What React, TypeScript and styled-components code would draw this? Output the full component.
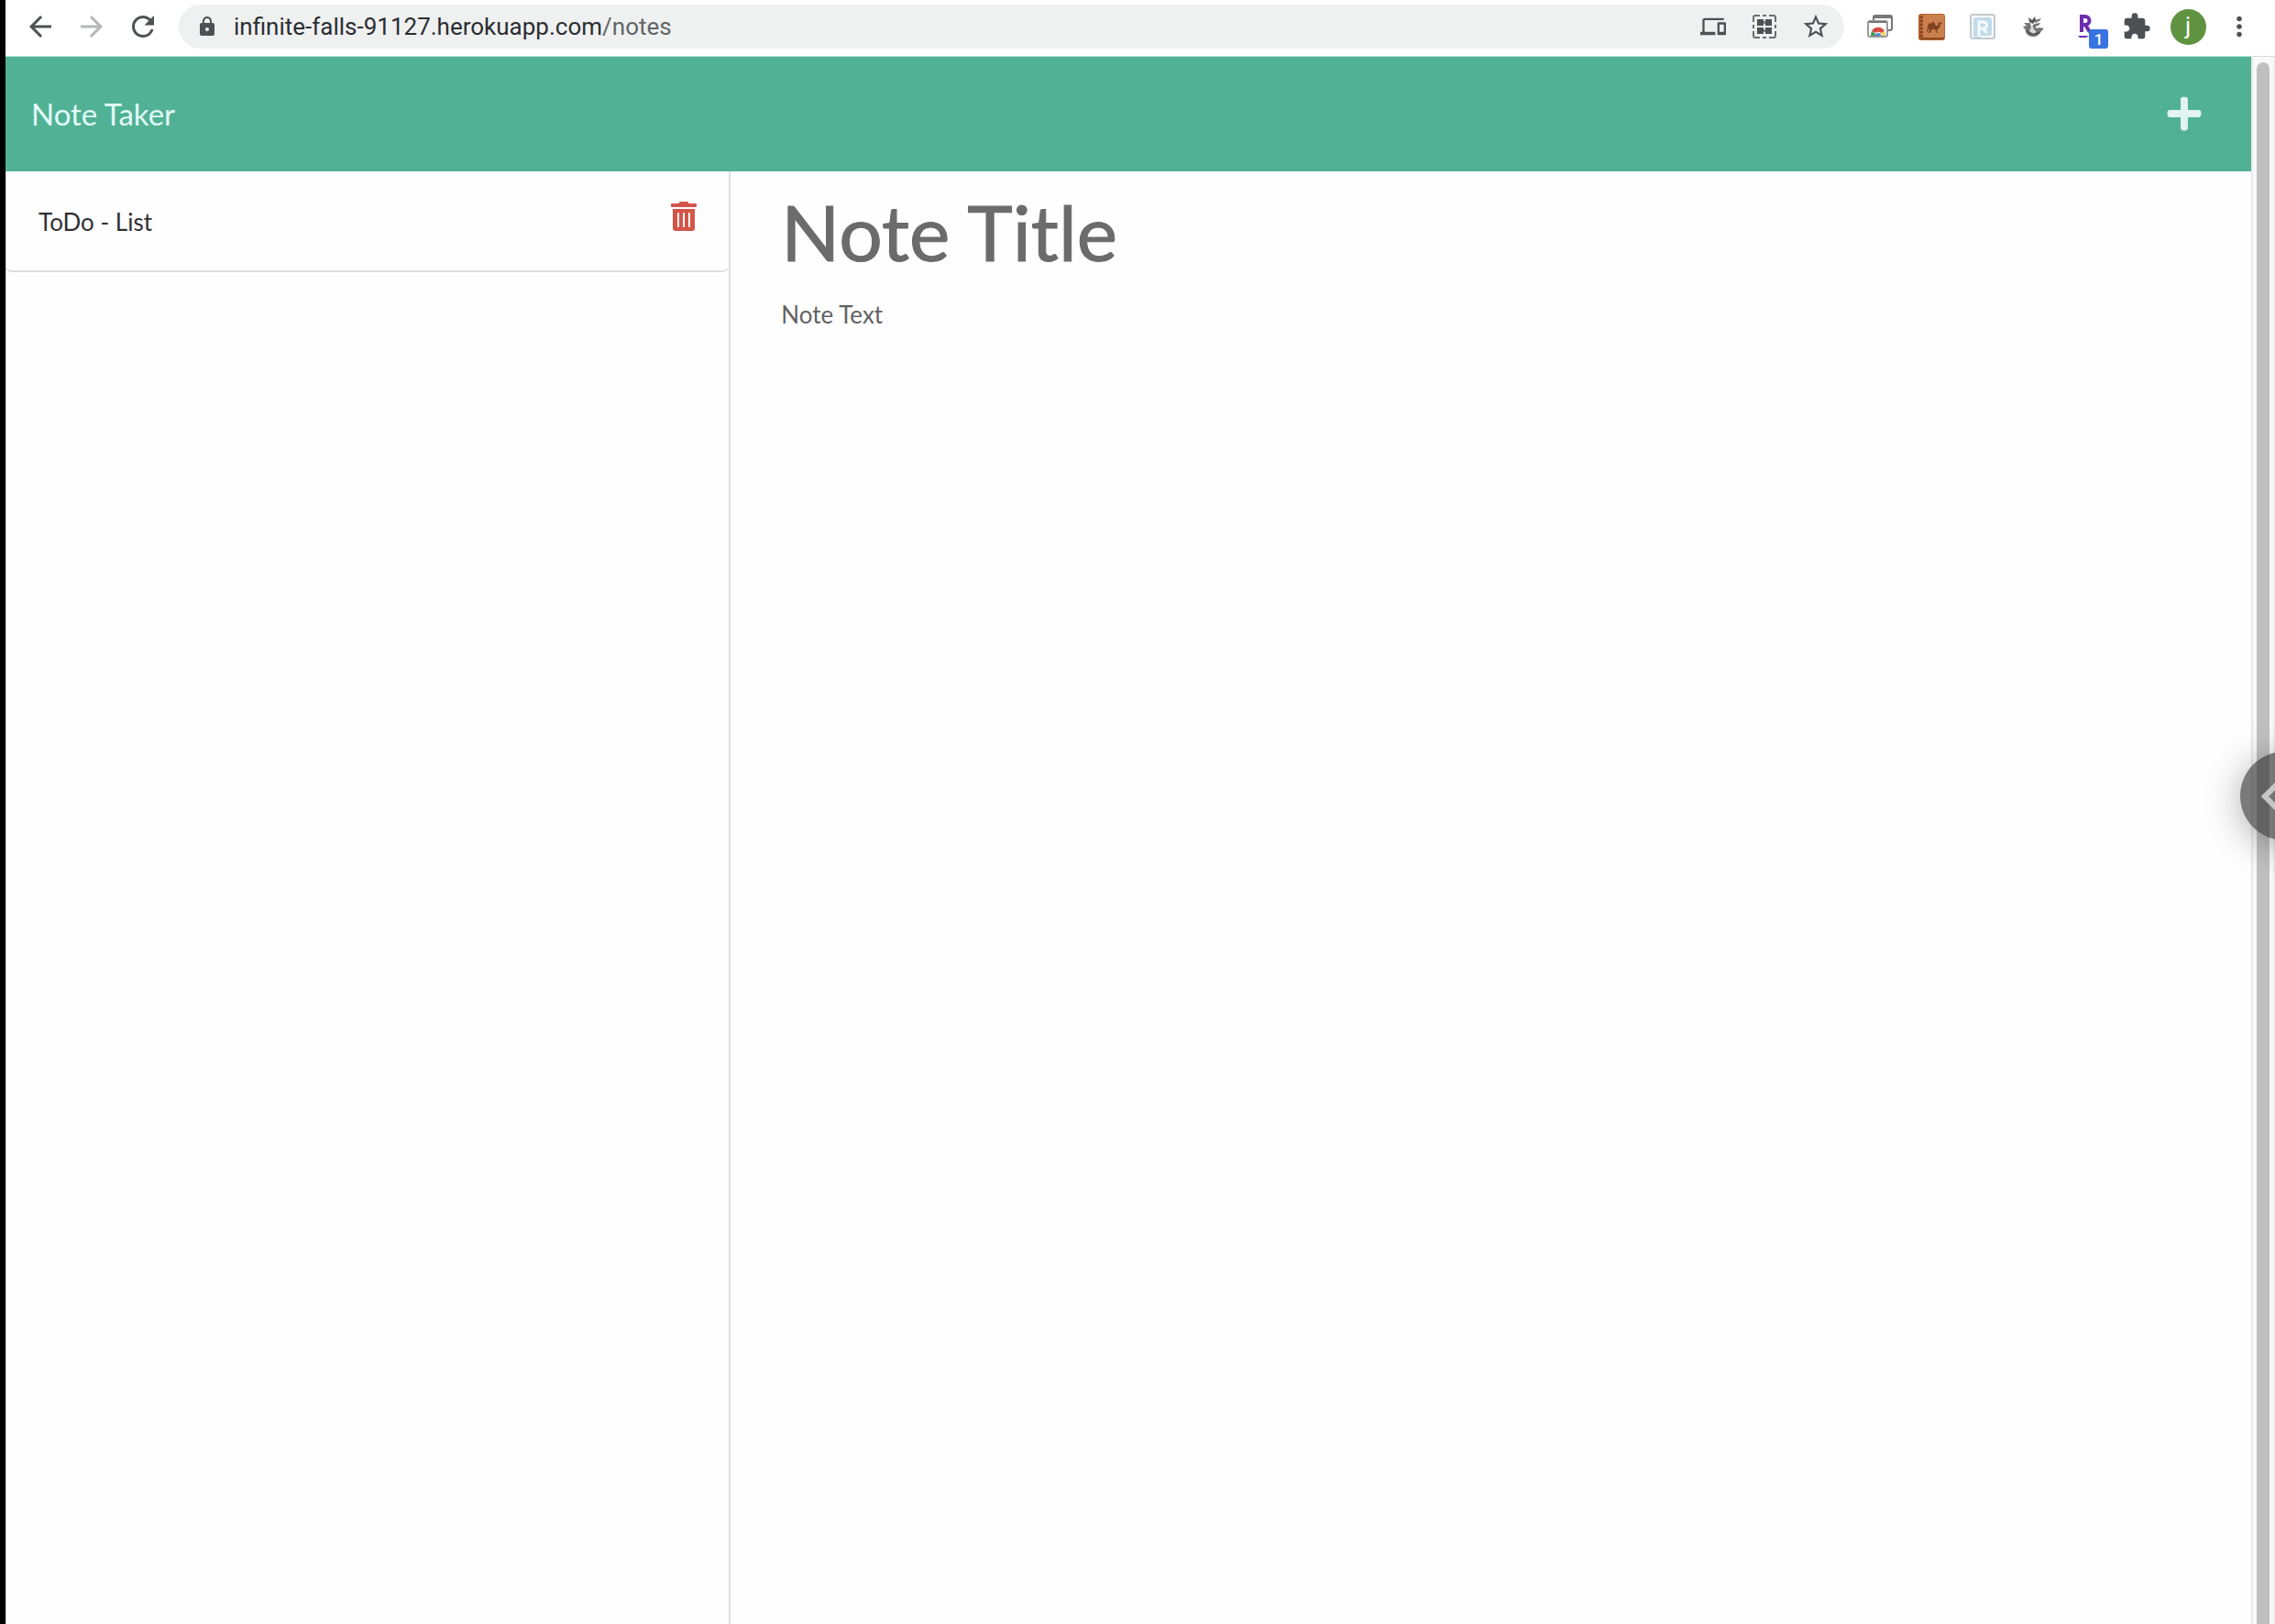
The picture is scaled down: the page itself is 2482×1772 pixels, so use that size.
import React from "react";
import styled, { createGlobalStyle } from "styled-components";
import {
  MdArrowBack,
  MdArrowForward,
  MdRefresh,
  MdLock,
  MdOutlineDevices,
  MdStarBorder,
  MdExtension,
  MdMoreVert,
} from "react-icons/md";
import { FaPlus, FaTrashAlt } from "react-icons/fa";

const GlobalStyle = createGlobalStyle`
  *, *::before, *::after { box-sizing: border-box; }
  body {
    margin: 0;
    background: #fefefe;
    font-family: Lato, "Open Sans", sans-serif;
    overflow: hidden;
  }
  button { border: 0; padding: 0; background: none; cursor: pointer; font: inherit; }
`;

const Window = styled.div`
  display: flex;
  flex-direction: column;
  min-height: 100vh;
  border-left: 6px solid #000;
`;

const Toolbar = styled.header`
  display: flex;
  align-items: center;
  gap: 11px;
  padding: 5px 11px 8px 10px;
  background: #fff;
  font-family: Roboto, "Liberation Sans", sans-serif;
`;

const Group = styled.div`
  display: flex;
`;

const ToolButton = styled.button<{ $tone?: string; $size?: number }>`
  position: relative;
  display: flex;
  align-items: center;
  justify-content: center;
  width: 56px;
  height: 48px;
  color: ${(p) => p.$tone ?? "#4d5154"};
  font-size: ${(p) => p.$size ?? 36}px;
`;

const AddressBar = styled.div`
  flex: 1;
  display: flex;
  align-items: center;
  padding: 0 3px 0 19px;
  border-radius: 24px;
  background: #eff1f1;
  color: #4d5154;
  font-size: 24px;
`;

const Url = styled.span`
  flex: 1;
  padding-left: 17px;
  color: #2b2e31;
  font-size: 26px;
  line-height: 32px;
`;

const UrlPath = styled.span`
  color: #616568;
`;

const Badge = styled.span`
  position: absolute;
  right: 3px;
  bottom: 0;
  width: 21px;
  height: 21px;
  border-radius: 3px;
  background: #3874e0;
  color: #fff;
  font-size: 17px;
  font-weight: 500;
  line-height: 22px;
  text-align: center;
`;

const Avatar = styled.span`
  width: 39px;
  height: 39px;
  border-radius: 50%;
  background: #5f9341;
  color: #fff;
  font-size: 26px;
  line-height: 37px;
  text-align: center;
`;

const Viewport = styled.div`
  flex: 1;
  display: flex;
  border-left: 1px solid #d3d3d3;
`;

const Page = styled.div`
  flex: 1;
  display: flex;
  flex-direction: column;
  margin-left: -1px;
`;

const Navbar = styled.nav`
  display: flex;
  align-items: center;
  justify-content: space-between;
  height: 126px;
  padding: 0 52px 2px 28px;
  border-top: 1px solid #b5e3d6;
  background: #51b194;
`;

const Brand = styled.a`
  color: #e2fbf8;
  font-size: 33px;
  line-height: 48px;
  text-decoration: none;
`;

const AddButton = styled.button`
  display: flex;
  color: #e2f4f1;
  font-size: 42px;
`;

const Columns = styled.div`
  flex: 1;
  display: flex;
`;

const Sidebar = styled.aside`
  width: 32.3%;
  border-right: 2px solid #dfdfdf;
`;

const NoteList = styled.ul`
  margin: 0;
  padding: 0;
  list-style: none;
`;

const NoteItem = styled.li`
  display: flex;
  align-items: flex-start;
  justify-content: space-between;
  height: 110px;
  padding: 33px 33px 0 36px;
  border-bottom: 2px solid #dfdfdf;
  border-radius: 0 0 7px 7px;
`;

const NoteName = styled.button`
  color: #2f3133;
  font-size: 26px;
  line-height: 44px;
`;

const DeleteButton = styled.button`
  display: flex;
  color: #d3554a;
  font-size: 32px;
`;

const Editor = styled.main`
  flex: 1;
  display: flex;
  flex-direction: column;
  padding: 14px 55px;
`;

const TitleInput = styled.input`
  width: 100%;
  height: 102px;
  padding: 0;
  border: 0;
  outline: 0;
  background: none;
  color: #333;
  font: 84px Lato, sans-serif;
  &::placeholder {
    color: #6b6b6b;
    opacity: 1;
    -webkit-text-stroke: 1px #6b6b6b;
  }
`;

const TextInput = styled.textarea`
  flex: 1;
  width: 100%;
  padding: 20px 0 0;
  border: 0;
  outline: 0;
  resize: none;
  background: none;
  color: #333;
  font: 26px/40px Lato, sans-serif;
  &::placeholder { color: #626262; opacity: 1; }
`;

const ScrollTrack = styled.div`
  display: flex;
  width: 26px;
  padding: 6px 4px 0 4px;
  border-left: 2px solid #e9e9e9;
  border-right: 2px solid #ececec;
  border-top: 1px solid #d8d8d8;
  background: #f9f9f9;
`;

const ScrollThumb = styled.div`
  width: 14px;
  border-radius: 7px 7px 0 0;
  background: #c0c0c0;
`;

const DrawerToggle = styled.button`
  position: fixed;
  top: 820px;
  right: -59px;
  width: 97px;
  height: 97px;
  border-radius: 50%;
  background: rgba(40, 40, 40, 0.62);
  box-shadow: 0 6px 40px rgba(0, 0, 0, 0.32);
`;

const DrawerArrow = styled.svg`
  display: block;
  margin-left: 23px;
`;

const ScanIcon = () => (
  <svg width="26" height="26" viewBox="0 0 26 26" aria-hidden="true">
    <path
      d="M1 8V3a2 2 0 0 1 2-2h5M11 1h4M18 1h5a2 2 0 0 1 2 2v5M25 11v4M25 18v5a2 2 0 0 1-2 2h-5M15 25h-4M8 25H3a2 2 0 0 1-2-2v-5M1 15v-4"
      fill="none"
      stroke="#6c6f71"
      strokeWidth="2"
    />
    <path d="M5 5h7v7H5zM14 5h7v7h-7zM5 14h7v7H5zM14 14h7v7h-7z" fill="#4d5154" />
    <path d="M12 7h2v3h-2zM12 16h2v3h-2z" fill="#85888a" />
  </svg>
);

const CastIcon = () => (
  <svg width="28" height="26" viewBox="0 0 28 26" aria-hidden="true">
    <path d="M7 6V3a2 2 0 0 1 2-2h16a2 2 0 0 1 2 2v12a2 2 0 0 1-2 2h-2" fill="none" stroke="#777" strokeWidth="2" />
    <path d="M7 3h20" stroke="#777" strokeWidth="2" />
    <rect x="1" y="7" width="21" height="17" rx="2" fill="#fafafa" stroke="#999" strokeWidth="2" />
    <path d="M2 8h19" stroke="#777" strokeWidth="2" />
    <path d="M5 18a8 8 0 0 1 14 0l-4 2a4 4 0 0 0-6 0z" fill="#d64a3f" />
    <path d="M5 18l4 3v2H4a8 8 0 0 1 1-5z" fill="#3f9a57" />
    <path d="M19 18a8 8 0 0 1 1 5h-5v-3z" fill="#f3cf62" />
    <path d="M9 23a3 3 0 0 1 6 0z" fill="#4a86dc" />
  </svg>
);

const CamelIcon = () => (
  <svg width="29" height="29" viewBox="0 0 29 29" aria-hidden="true">
    <rect width="29" height="29" rx="3" fill="#b56430" />
    <rect x="5" y="1" width="23" height="25" rx="2" fill="#cb7f4c" />
    <path d="M1 27h27" stroke="#8a4c28" strokeWidth="2" />
    <path d="M3 3v23" stroke="#7d4423" strokeWidth="3" strokeDasharray="2 2" />
    <path
      d="M9 20l1-6 1-3 2-1 1 1 2-3 2 3 1 2 2 0 1-3 2-1 2 1-1 1-1 0-1 4-2 2-1 1 1 3h-1l-2-4h-3l-1 1-1 3h-2l1-4-1-1-1 4z"
      fill="#7d4220"
    />
  </svg>
);

const PageRulerIcon = () => (
  <svg width="28" height="28" viewBox="0 0 28 28" aria-hidden="true">
    <rect x="1" y="1" width="26" height="26" rx="2" fill="#f4f9fc" stroke="#c3c9cc" strokeWidth="2" />
    <path d="M7 4h14a3 3 0 0 1 3 3v14a3 3 0 0 1-3 3h-9v2H7a3 3 0 0 1-3-3V7a3 3 0 0 1 3-3z" fill="#c2dbeb" />
    <path d="M10 25V9h5a3 3 0 0 1 0 7h-5M14 16l5 5" fill="none" stroke="#f4fafd" strokeWidth="3" />
  </svg>
);

const BirdIcon = () => (
  <svg width="24" height="24" viewBox="0 0 24 24" aria-hidden="true">
    <path d="M6 2l4 3 3-4 1 4-3 4-4-2z" fill="#555" />
    <path d="M13 5l7-2-2 3-5 2z" fill="#777" />
    <path d="M12 9l7-1-2 3-4 1z" fill="#777" />
    <path d="M1 8l7 0 1 5 3-4 3 5 3-1 5 1-3 3c-2 4-5 6-9 6-5 0-8-3-8-7L0 12l4-1z" fill="#777" />
    <path d="M7 17l3-7 2 5 3 3-4 2z" fill="#d9d9d9" />
    <path d="M4 16c3 5 9 6 14 2" fill="none" stroke="#555" strokeWidth="2" />
  </svg>
);

const RakutenIcon = () => (
  <svg width="18" height="28" viewBox="0 0 18 28" aria-hidden="true">
    <path d="M5 20V3h4a4 4 0 0 1 0 9H5M9 12l5 8" fill="none" stroke="#6d2bb0" strokeWidth="4" />
    <path d="M1 24h12l-3 2H3z" fill="#6d2bb0" />
  </svg>
);

const App = () => (
  <>
    <GlobalStyle />
    <Window>
      <Toolbar>
        <Group>
          <ToolButton aria-label="Back"><MdArrowBack /></ToolButton>
          <ToolButton aria-label="Forward" $tone="#b4b6b8"><MdArrowForward /></ToolButton>
          <ToolButton aria-label="Reload"><MdRefresh /></ToolButton>
        </Group>
        <AddressBar>
          <MdLock />
          <Url>
            infinite-falls-91127.herokuapp.com<UrlPath>/notes</UrlPath>
          </Url>
          <ToolButton aria-label="Send to devices" $size={28}><MdOutlineDevices /></ToolButton>
          <ToolButton aria-label="Scan code"><ScanIcon /></ToolButton>
          <ToolButton aria-label="Bookmark" $size={32}><MdStarBorder /></ToolButton>
        </AddressBar>
        <Group>
          <ToolButton aria-label="Remote desktop"><CastIcon /></ToolButton>
          <ToolButton aria-label="Price tracker"><CamelIcon /></ToolButton>
          <ToolButton aria-label="Page ruler"><PageRulerIcon /></ToolButton>
          <ToolButton aria-label="Bird"><BirdIcon /></ToolButton>
          <ToolButton aria-label="Cash back">
            <RakutenIcon />
            <Badge>1</Badge>
          </ToolButton>
          <ToolButton aria-label="Extensions" $size={32}><MdExtension /></ToolButton>
          <ToolButton aria-label="Profile"><Avatar>j</Avatar></ToolButton>
          <ToolButton aria-label="Menu" $size={34}><MdMoreVert /></ToolButton>
        </Group>
      </Toolbar>
      <Viewport>
        <Page>
          <Navbar>
            <Brand href="#">Note Taker</Brand>
            <AddButton aria-label="New note"><FaPlus /></AddButton>
          </Navbar>
          <Columns>
            <Sidebar>
              <NoteList>
                <NoteItem>
                  <NoteName>ToDo - List</NoteName>
                  <DeleteButton aria-label="Delete note"><FaTrashAlt /></DeleteButton>
                </NoteItem>
              </NoteList>
            </Sidebar>
            <Editor>
              <TitleInput aria-label="Note Title" placeholder="Note Title" />
              <TextInput aria-label="Note Text" placeholder="Note Text" />
            </Editor>
          </Columns>
        </Page>
        <ScrollTrack>
          <ScrollThumb />
        </ScrollTrack>
      </Viewport>
    </Window>
    <DrawerToggle aria-label="Open drawer">
      <DrawerArrow width="40" height="40" viewBox="0 0 40 40" aria-hidden="true">
        <path d="M22 2L4 20l18 18" fill="none" stroke="#c6c6c6" strokeWidth="6" />
      </DrawerArrow>
    </DrawerToggle>
  </>
);

export default App;
